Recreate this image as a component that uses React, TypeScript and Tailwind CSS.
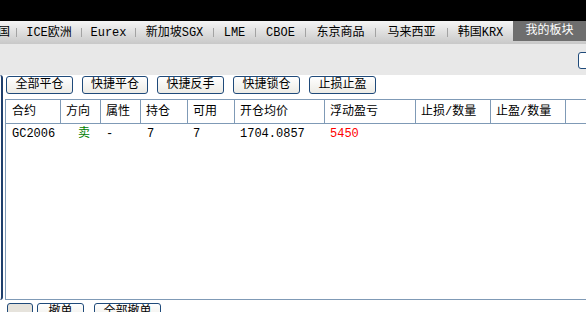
import React from "react";

const FONT = { fontFamily: '"Liberation Mono","Noto Sans CJK SC",monospace' };

const tabs: { label: string; w: number }[] = [
  { label: "ICE欧洲", w: 64 },
  { label: "Eurex", w: 53 },
  { label: "新加坡SGX", w: 77 },
  { label: "LME", w: 41 },
  { label: "CBOE", w: 49 },
  { label: "东京商品", w: 69 },
  { label: "马来西亚", w: 71 },
  { label: "韩国KRX", w: 65 },
];

function Sep() {
  return <div className="w-px h-[9px] mt-[7px] bg-[#a3a3a3] shrink-0" />;
}

function Btn({ label, w }: { label: string; w: number }) {
  return (
    <div
      className="h-[18px] shrink-0 rounded-[3px] border border-[#1f4a7a] bg-gradient-to-b from-[#ffffff] to-[#ecebe5] flex items-center justify-center text-[12px] text-black leading-none"
      style={{ width: w }}
    >
      {label}
    </div>
  );
}

const cols = [55, 40, 40, 47, 47, 90, 91, 75, 75];
const headers = ["合约", "方向", "属性", "持仓", "可用", "开仓均价", "浮动盈亏", "止损/数量", "止盈/数量"];

export default function App() {
  return (
    <div className="w-[586px] h-[312px] overflow-hidden bg-white" style={FONT}>
      <div className="h-[21px] bg-black" />
      <div className="h-[23px] flex items-start bg-gradient-to-b from-[#f5f5f5] to-[#c8c8c8] text-[12px] text-black">
        <div className="w-[16px] h-[20px] overflow-hidden flex justify-end items-center pr-[6px] shrink-0 whitespace-nowrap mt-[2px]">
          <span>美国</span>
        </div>
        {tabs.map((t) => (
          <React.Fragment key={t.label}>
            <Sep />
            <div
              className="h-[20px] flex items-center justify-center shrink-0 whitespace-nowrap mt-[2px]"
              style={{ width: t.w }}
            >
              {t.label}
            </div>
          </React.Fragment>
        ))}
        <div className="flex-1 h-[20px] bg-[#6e6e6e] text-white flex items-center justify-center whitespace-nowrap">
          我的板块
        </div>
      </div>
      <div className="h-[31px] bg-[#e8e8e8] flex justify-end pt-[8px] overflow-hidden">
        <div className="w-[20px] h-[17px] mr-[-12px] rounded-[3px] border border-[#1f4a7a] bg-white shrink-0" />
      </div>
      <div className="flex">
        <div className="w-[3px] shrink-0 border-r-2 border-[#1f3f6c] rounded-r-[4px]" />
        <div className="flex-1 flex flex-col min-w-0">
          <div className="flex mt-[1px] pl-[3px] gap-[9px]">
            <Btn label="全部平仓" w={67} />
            <Btn label="快捷平仓" w={66} />
            <Btn label="快捷反手" w={67} />
            <Btn label="快捷锁仓" w={67} />
            <Btn label="止损止盈" w={67} />
          </div>
          <div className="mt-[5px] ml-[2px] h-[201px] border border-r-0 border-[#7f9ab6] text-[12px] text-black">
            <div className="flex h-[24px] border-b border-[#7f9ab6]">
              {headers.map((h, i) => (
                <div
                  key={h}
                  className="shrink-0 border-r border-[#7f9ab6] flex items-center whitespace-nowrap"
                  style={{ width: cols[i], paddingLeft: i === 0 ? 6 : 5 }}
                >
                  {h}
                </div>
              ))}
              <div className="flex-1" />
            </div>
            <div className="flex h-[19px] items-center whitespace-nowrap">
              <div className="shrink-0 pl-[6px]" style={{ width: cols[0] }}>GC2006</div>
              <div className="shrink-0 pl-[17px] text-[#008000]" style={{ width: cols[1] }}>卖</div>
              <div className="shrink-0 pl-[5px]" style={{ width: cols[2] }}>-</div>
              <div className="shrink-0 pl-[6px]" style={{ width: cols[3] }}>7</div>
              <div className="shrink-0 pl-[5px]" style={{ width: cols[4] }}>7</div>
              <div className="shrink-0 pl-[5px]" style={{ width: cols[5] }}>1704.0857</div>
              <div className="shrink-0 pl-[5px] text-[#ff0000]" style={{ width: cols[6] }}>5450</div>
            </div>
          </div>
        </div>
      </div>
      <div className="flex mt-[3px] pl-[7px] gap-[4px]">
        <div className="w-[26px] h-[18px] rounded-[3px] border border-[#1f4a7a] bg-[#e6e3dc] shrink-0" />
        <Btn label="撤单" w={47} />
        <div className="w-[2px] shrink-0" />
        <Btn label="全部撤单" w={67} />
      </div>
    </div>
  );
}
